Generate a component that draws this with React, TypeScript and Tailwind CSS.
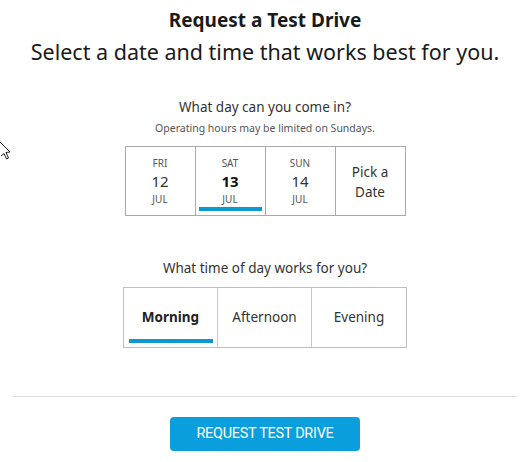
import React, { useState } from 'react';

const DAYS = [
  { dow: 'FRI', day: '12', mon: 'JUL' },
  { dow: 'SAT', day: '13', mon: 'JUL' },
  { dow: 'SUN', day: '14', mon: 'JUL' },
];

const TIMES = ['Morning', 'Afternoon', 'Evening'];

function Cursor() {
  return (
    <svg className="absolute left-0 top-[138px]" width="12" height="22" viewBox="0 0 12 22">
      <path d="M-2 2 L10 14 L6 14.5 L8.5 20 L6.5 21 L4 15.5 L1 18" fill="#fff" stroke="#222" strokeWidth="1" strokeLinejoin="round" />
    </svg>
  );
}

export default function App() {
  const [day, setDay] = useState(1);
  const [time, setTime] = useState(0);

  return (
    <div className="relative w-[530px] h-[462px] bg-white text-[#1a1a1a] font-['Noto_Sans',sans-serif] overflow-hidden">
      <Cursor />
      <div className="flex flex-col items-center pt-[8px]">
        <h1 className="text-[19px] font-bold leading-[24px]">Request a Test Drive</h1>
        <p className="text-[21.5px] leading-[30px] mt-[5px]">Select a date and time that works best for you.</p>

        <p className="text-[13.5px] leading-[20px] text-[#333] mt-[30px]">What day can you come in?</p>
        <p className="text-[10.5px] leading-[14px] text-[#555] mt-[4px]">Operating hours may be limited on Sundays.</p>

        {/* Day picker */}
        <div className="flex mt-[11px] border border-[#a9a9a9]">
          {DAYS.map((d, i) => (
            <button
              key={d.day}
              onClick={() => setDay(i)}
              className="relative w-[70px] h-[68px] flex flex-col items-center pt-[10px] border-r border-[#a9a9a9]"
            >
              <span className="text-[10px] leading-[12px] text-[#555]">{d.dow}</span>
              <span className={`text-[15px] leading-[22px] mt-[1px] ${day === i ? 'font-bold text-[#111]' : 'text-[#333]'}`}>{d.day}</span>
              <span className="text-[10px] leading-[12px] text-[#555] mt-[1px]">{d.mon}</span>
              {day === i && <span className="absolute left-[3px] right-[3px] bottom-[4px] h-[4px] bg-[#0d98cf]" />}
            </button>
          ))}
          <button className="w-[69px] h-[68px] flex flex-col items-center justify-center pt-[2px] text-[13.5px] leading-[20px] text-[#333]">
            <span>Pick a</span>
            <span>Date</span>
          </button>
        </div>

        <p className="text-[13.5px] leading-[20px] text-[#333] mt-[42px]">What time of day works for you?</p>

        {/* Time picker */}
        <div className="flex mt-[9px] border border-[#bdbdbd]">
          {TIMES.map((t, i) => (
            <button
              key={t}
              onClick={() => setTime(i)}
              className={`relative w-[94px] h-[59px] flex items-center justify-center text-[13.5px] ${i < 2 ? 'border-r border-[#c8c8c8]' : ''} ${time === i ? 'font-bold text-[#222]' : 'text-[#333]'}`}
            >
              {t}
              {time === i && <span className="absolute left-[5px] right-[4px] bottom-[4px] h-[4px] bg-[#0d98cf]" />}
            </button>
          ))}
        </div>
      </div>

      <div className="mx-[13px] mt-[48px] border-t border-[#dcdcdc]" />

      <div className="flex justify-center mt-[20px]">
        <button className="w-[190px] h-[34px] rounded-[4px] bg-[#0a9fdc] text-white text-[14.5px] tracking-[-0.3px] font-['Roboto',sans-serif]">
          REQUEST TEST DRIVE
        </button>
      </div>
    </div>
  );
}
